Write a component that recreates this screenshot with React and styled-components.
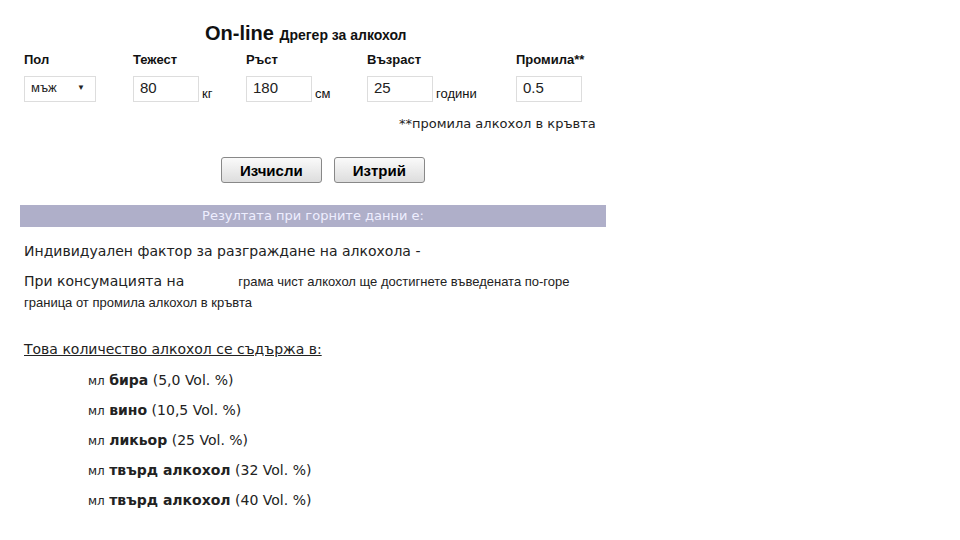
import React from "react";
import styled, { createGlobalStyle } from "styled-components";

const Global = createGlobalStyle`
  body { margin: 0; background: #fff; font-family: "Liberation Sans", Arial, sans-serif; color: #111; }
`;

const Page = styled.div`
  width: 586px;
  margin-left: 20px;
  overflow: hidden;
`;

const Title = styled.h1`
  margin: 20px 0 0;
  padding-left: 185px;
  font-size: 20px;
  font-weight: bold;
  line-height: 26px;
  span { font-size: 14px; }
`;

const FieldRow = styled.div`
  display: flex;
  padding-left: 4px;
  margin-top: 4px;
`;

const Field = styled.div`
  width: ${({ w }) => w}px;
  flex: none;
`;

const Label = styled.div`
  font-size: 13px;
  font-weight: bold;
  height: 20px;
`;

const InputLine = styled.div`
  display: flex;
  align-items: flex-end;
  margin-top: 4px;
`;

const Input = styled.div`
  width: 58px;
  height: 24px;
  border: 1px solid #ddd;
  padding-left: 6px;
  font-size: 15px;
  line-height: 22px;
  color: #222;
`;

const Select = styled(Input)`
  width: 54px;
  font-size: 13px;
  display: flex;
  justify-content: space-between;
  padding-right: 10px;
  &::after { content: "▼"; font-size: 8px; }
`;

const Unit = styled.span`
  font-size: 13px;
  margin-left: 3px;
  margin-bottom: 1px;
`;

const Note = styled.div`
  margin-top: 14px;
  padding-left: 379px;
  white-space: nowrap;
  font-family: "DejaVu Sans", sans-serif;
  font-size: 13px;
  color: #222;
`;

const Buttons = styled.div`
  display: flex;
  gap: 12px;
  padding-left: 201px;
  margin-top: 26px;
`;

const Button = styled.button`
  height: 26px;
  padding: 0 18px;
  font-family: "Liberation Sans", Arial, sans-serif;
  font-size: 15px;
  font-weight: bold;
  border: 1px solid #888;
  border-radius: 3px;
  background: linear-gradient(#fafafa, #ddd);
`;

const Bar = styled.div`
  margin-top: 22px;
  height: 22px;
  background: #afafc9;
  color: #eef;
  text-align: center;
  font-family: "DejaVu Sans", sans-serif;
  font-size: 13px;
  line-height: 22px;
`;

const Text = styled.p`
  margin: ${({ m }) => m};
  padding-left: 4px;
  padding-right: 10px;
  font-family: "DejaVu Sans", sans-serif;
  font-size: 14px;
  line-height: 20px;
  color: #222;
  small { font-family: "Liberation Sans", Arial, sans-serif; font-size: 13px; }
`;

const Gap = styled.span`
  display: inline-block;
  width: 54px;
`;

const List = styled.div`
  padding-left: 68px;
  margin-top: 7px;
`;

const Item = styled.div`
  font-family: "DejaVu Sans", sans-serif;
  font-size: 14px;
  line-height: 29px;
  color: #222;
  small { font-size: 12px; }
`;

const fields = [
  { label: "Пол", w: 109, select: "мъж" },
  { label: "Тежест", w: 113, value: "80", unit: "кг" },
  { label: "Ръст", w: 121, value: "180", unit: "см" },
  { label: "Възраст", w: 149, value: "25", unit: "години" },
  { label: "Промила**", w: 90, value: "0.5" },
];

const drinks = [
  ["бира", "(5,0 Vol. %)"],
  ["вино", "(10,5 Vol. %)"],
  ["ликьор", "(25 Vol. %)"],
  ["твърд алкохол", "(32 Vol. %)"],
  ["твърд алкохол", "(40 Vol. %)"],
];

export default function App() {
  return (
    <Page>
      <Global />
      <Title>On-line <span>Дрегер за алкохол</span></Title>
      <FieldRow>
        {fields.map((f) => (
          <Field key={f.label} w={f.w}>
            <Label>{f.label}</Label>
            <InputLine>
              {f.select ? <Select>{f.select}</Select> : <Input>{f.value}</Input>}
              {f.unit && <Unit>{f.unit}</Unit>}
            </InputLine>
          </Field>
        ))}
      </FieldRow>
      <Note>**промила алкохол в кръвта</Note>
      <Buttons>
        <Button>Изчисли</Button>
        <Button>Изтрий</Button>
      </Buttons>
      <Bar>Резултата при горните данни е:</Bar>
      <Text m="14px 0 0">Индивидуален фактор за разграждане на алкохола -</Text>
      <Text m="10px 0 0">
        При консумацията на<Gap /><small>грама чист алкохол ще достигнете въведената по-горе граница от промила алкохол в кръвта</small>
      </Text>
      <Text m="26px 0 0"><u>Това количество алкохол се съдържа в:</u></Text>
      <List>
        {drinks.map(([name, vol], i) => (
          <Item key={i}><small>мл</small> <b>{name}</b> {vol}</Item>
        ))}
      </List>
    </Page>
  );
}
